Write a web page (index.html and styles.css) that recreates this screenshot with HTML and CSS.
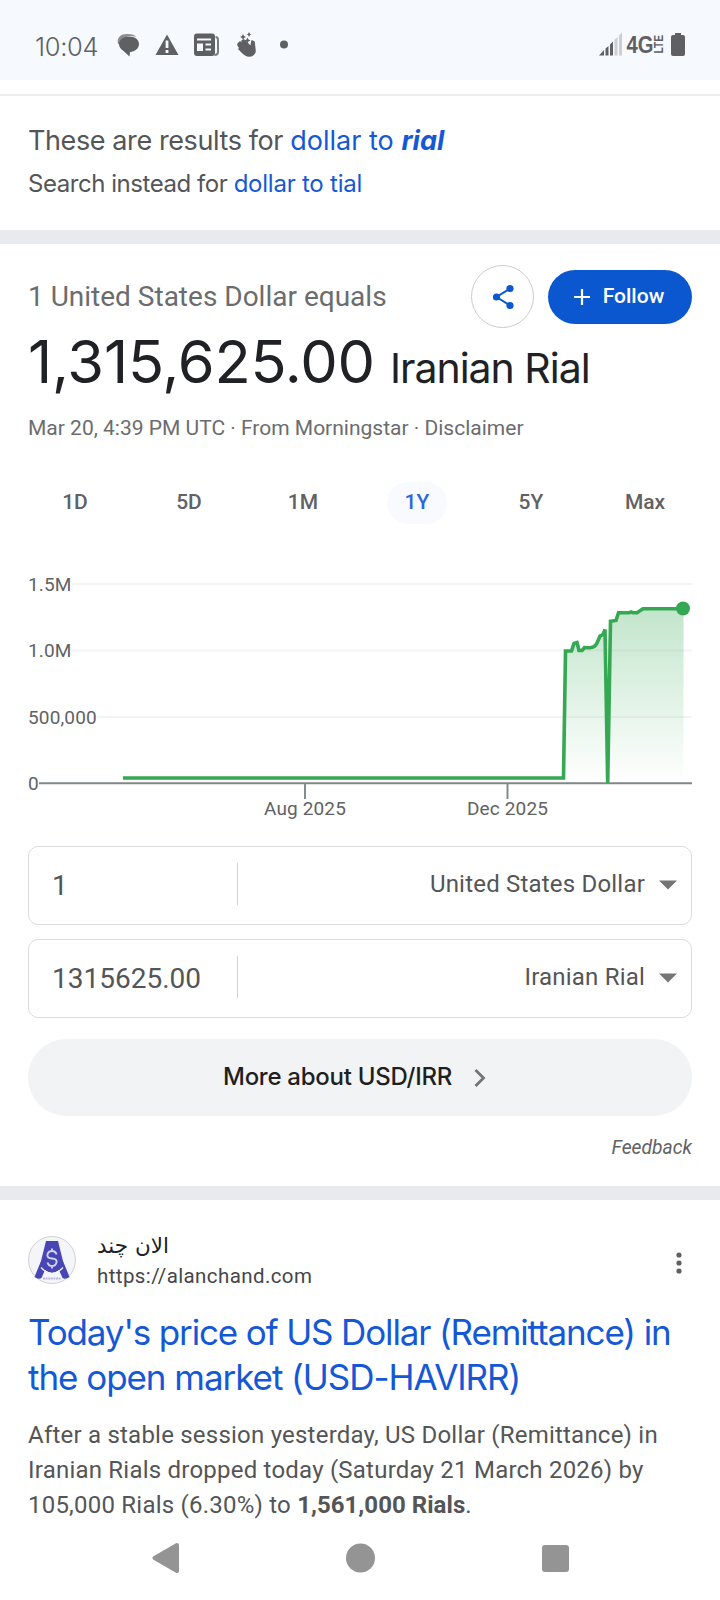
FILE: index.html
```html
<!DOCTYPE html>
<html lang="en">
<head>
<meta charset="utf-8">
<title>dollar to rial</title>
<link rel="stylesheet" href="styles.css">
</head>
<body>
<div class="phone">
  <header class="status">
    <span class="clock">10:04</span>
    <svg class="status-icons" width="180" height="28" viewBox="0 0 180 28">
      <g fill="#5f6062">
        <path d="M1 13C-.500 6 4 3 10 3c5 0 8 1 9.500 3-6-2-15-1-17 7z" fill="#8b8d90"/>
        <path d="M12 5.500c6 0 10 3 10 7.500s-4 7.500-9 8l-.500 4.500-6-5.500C3 18 2 15 2 13c0-4 4-7.500 10-7.500z"/>
        <path d="M50 3.500 61.500 24h-23z"/>
        <rect x="77" y="2.500" width="21" height="22.500" rx="3"/>
        <path d="M98.500 6q2.500 0 2.500 3V21q0 3-3.500 3" fill="none" stroke="#7b7c7f" stroke-width="2"/>
        <path d="M121 13l2-2 7 5-5-6 2-1 7 7 1-6 2 1 1 9c0 3-3 5-6 5-4 0-6-3-10-7l1-1-2-3 2-1z" stroke="#5f6062" stroke-width="1.600" stroke-linejoin="round"/>
        <path d="M126 3l1 2 2 1-2 1-1 2-1-2-2-1 2-1zM132 1l1 2 1.500.500-1.500.500-1 2-1-2-1.500-.500L131 3zM130.500 6.500l1 2 2 1-2 1-1 2-1-2-2-1 2-1z"/>
        <circle cx="167" cy="13.500" r="4"/>
      </g>
      <path d="M50 9.500v7.500M50 19v3" stroke="#f6f9fe" stroke-width="2.800"/>
      <path d="M80 8.500h14M88.500 13.500h5.500M88.500 18.500h5.500" stroke="#f6f9fe" stroke-width="1.900"/>
      <rect x="80" y="12.500" width="6" height="7.500" fill="#f6f9fe"/>
    </svg>
    <svg class="signal" width="88" height="26" viewBox="0 0 88 26">
      <path d="M1 22.500 6 17v5.500zM7.500 15.500 10.500 13v9.500h-3zM12 11.500l3-3v14h-3z" fill="#5f6062"/>
      <path d="M16.500 7l3-3v18.500h-3zM21 2.500l3-3v23h-3z" fill="#cdcfd3"/>
      <text x="28.500" y="20" class="net" textLength="27" lengthAdjust="spacingAndGlyphs">4G</text>
      <text class="lte" transform="translate(64.500 20.500) rotate(-90)" textLength="18.500" lengthAdjust="spacingAndGlyphs">LTE</text>
      <path d="M77 0h6v2h2q2 0 2 2v17q0 2-2 2H75q-2 0-2-2V4q0-2 2-2h2z" fill="#5f6062"/>
    </svg>
  </header>

  <section class="spell">
    <p class="spell-main">These are results for <a>dollar to <b>rial</b></a></p>
    <p class="spell-sub">Search instead for <a>dollar to tial</a></p>
  </section>

  <section class="finance">
    <div class="top-row">
      <span class="equals">1 United States Dollar equals</span>
      <button class="share" aria-label="Share">
        <svg width="24" height="26" viewBox="0 0 24 26"><path d="M19 4.500 5.500 13 19 21.500" fill="none" stroke="#0b57d0" stroke-width="2"/><g fill="#0b57d0"><circle cx="19" cy="4.500" r="3.600"/><circle cx="5.500" cy="13" r="3.600"/><circle cx="19" cy="21.500" r="3.600"/></g></svg>
      </button>
      <button class="follow">
        <svg width="18" height="18" viewBox="0 0 18 18"><path d="M9 1v16M1 9h16" stroke="#fff" stroke-width="2.200"/></svg>
        <span>Follow</span>
      </button>
    </div>
    <div class="amount"><span class="value">1,315,625.00</span><span class="unit">Iranian Rial</span></div>
    <div class="source">Mar 20, 4:39 PM UTC · From Morningstar · Disclaimer</div>
    <nav class="tabs">
      <span>1D</span><span>5D</span><span>1M</span><span class="on"><i>1Y</i></span><span>5Y</span><span>Max</span>
    </nav>
    <svg class="chart" width="664" height="260" viewBox="28 570 664 260">
      <defs><linearGradient id="fade" x1="0" y1="608" x2="0" y2="783" gradientUnits="userSpaceOnUse"><stop offset="0" stop-color="#34a853" stop-opacity=".3"/><stop offset="1" stop-color="#34a853" stop-opacity="0"/></linearGradient></defs>
      <path d="M72 584H692M72 650.500H692M97 717H692" stroke="#f4f4f5" stroke-width="1.800"/>
      <path d="M563 783 565.500 651H571L574 643 577 642 579 650.500H582L585 647.500 590 648 595 646 600 635 603 634.500 605 630 607.700 783 610.500 621H616L618.500 612.700 637 612.500 643 608.700H683.500V783z" fill="url(#fade)"/>
      <path d="M39 783.200H692M305 783v16M507.500 783v16" stroke="#80868b" stroke-width="1.900" fill="none"/>
      <path d="M123 778H563.500L565.500 651H571.500L574 643.500 577 642.500 579 650.500H582L584.500 647.500 590 647.700Q595 647.500 597 643L600 636 603 634.500 605 629.500 607.700 783 610.500 621.300 616 620.500 618.500 612.800H629L631 612 633 612.700H637L643 608.700H683" fill="none" stroke="#34a853" stroke-width="3.600"/>
      <circle cx="683" cy="608.500" r="7" fill="#34a853"/>
      <g class="axis">
        <text x="28" y="591">1.5M</text><text x="28" y="657">1.0M</text><text x="28" y="724">500,000</text><text x="28" y="790">0</text>
        <text x="305" y="815" text-anchor="middle">Aug 2025</text><text x="507.500" y="815" text-anchor="middle">Dec 2025</text>
      </g>
    </svg>
    <div class="field">
      <span class="num">1</span><span class="currency">United States Dollar</span><svg width="18" height="10" viewBox="0 0 18 10"><path d="M0 .500h18l-9 9z" fill="#757575"/></svg>
    </div>
    <div class="field">
      <span class="num">1315625.00</span><span class="currency">Iranian Rial</span><svg width="18" height="10" viewBox="0 0 18 10"><path d="M0 .500h18l-9 9z" fill="#757575"/></svg>
    </div>
    <a class="more"><span>More about USD/IRR</span><svg width="12" height="20" viewBox="0 0 12 20"><path d="M1.500 2 9.500 10l-8 8" fill="none" stroke="#757575" stroke-width="2.800"/></svg></a>
    <div class="feedback">Feedback</div>
  </section>

  <article class="result">
    <div class="site">
      <svg class="favicon" width="48" height="48" viewBox="0 0 48 48">
        <circle cx="24" cy="24" r="23.500" fill="#f3f5f8" stroke="#cfd1d5"/>
        <path d="M18 5h12l5 20 6.500 16q-4 3-7 1l-3.500-8q-7 5.500-14 0l-3.500 8q-3 2-7-1L13 25z" fill="#4845b5"/>
        <path d="M13 31.500q11 12 22 0" fill="none" stroke="#f3f5f8" stroke-width="1.200"/>
        <path d="M15 42.500h18" stroke="#b9b9e4" stroke-width="2" stroke-dasharray="2 .6"/>
        <path d="M28.500 18.500q-1-3.500-4.500-3.500t-4.500 3.500 4.500 4 4.500 4-4.500 3.500-4.500-3.500M24 12.500v3M24 29.500v3" fill="none" stroke="#d2d4f0" stroke-width="1.900"/>
      </svg>
      <div class="site-text"><span class="name" lang="fa" dir="rtl">الان چند</span><span class="url">https://alanchand.com</span></div>
      <svg class="dots" width="6" height="24" viewBox="0 0 6 24"><g fill="#5f6062"><circle cx="3" cy="4" r="2.600"/><circle cx="3" cy="12" r="2.600"/><circle cx="3" cy="20" r="2.600"/></g></svg>
    </div>
    <h3><span class="t1">Today's price of US Dollar (Remittance) in</span><br><span class="t2">the open market (USD-HAVIRR)</span></h3>
    <p class="snippet">After a stable session yesterday, US Dollar (Remittance) in<br>Iranian Rials dropped today (Saturday 21 March 2026) by<br>105,000 Rials (6.30%) to <b>1,561,000 Rials</b>.</p>
  </article>

  <footer class="navbar">
    <svg width="28" height="30" viewBox="0 0 28 30"><path d="M25 2 2.500 15 25 28z" fill="#949494" stroke="#949494" stroke-width="4" stroke-linejoin="round"/></svg>
    <svg width="30" height="30" viewBox="0 0 30 30"><circle cx="14.500" cy="15" r="14.500" fill="#949494"/></svg>
    <svg width="27" height="27" viewBox="0 0 27 27"><rect width="27" height="27" rx="3" fill="#949494"/></svg>
  </footer>
</div>
</body>
</html>
```

FILE: styles.css
```css
* { box-sizing: border-box; }
body { margin: 0; background: #fff; font-family: Roboto, sans-serif; color: #5f6062; }
p, h3 { margin: 0; font-weight: 400; }
button { border: 0; padding: 0; font: inherit; }
svg { display: block; flex: none; overflow: visible; }
a { color: #1558d6; }
.phone { width: 720px; height: 1600px; overflow: hidden; display: flex; flex-direction: column; white-space: nowrap; }

.status { height: 80px; flex: none; background: #f6f9fe; display: flex; align-items: flex-start; padding: 32px 34px 0 35px; }
.clock { font: 300 25.500px/29px Inter, sans-serif; width: 82px; letter-spacing: -.3px; }
.status-icons { margin-top: -1px; }
.signal { margin: 1px 0 0 auto; }
.net { font: 700 24px "Liberation Sans", sans-serif; fill: #5f6062; }
.lte { font: 700 12px "Liberation Sans", sans-serif; fill: #5f6062; }

.spell { height: 150px; flex: none; margin-top: 14px; border-top: 2px solid #ededee; border-bottom: 14px solid #e8eaed; padding: 24px 28px 0; font-family: Inter, sans-serif; color: #545557; }
.spell-main { font-size: 27px; line-height: 42px; letter-spacing: -.400px; }
.spell-main a { letter-spacing: 0; }
.spell-main b { font-style: italic; font-weight: 700; }
.spell-sub { font-size: 24px; line-height: 44px; letter-spacing: -.450px; }
.spell-sub a { letter-spacing: -.230px; }

.finance { height: 956px; flex: none; padding: 21px 28px 0; border-bottom: 14px solid #e8eaed; }
.top-row { display: flex; align-items: center; height: 63px; }
.equals { flex: 1; font-size: 28px; color: #6b6c6e; }
.share { width: 63px; height: 63px; border: 1px solid #ccc; border-radius: 50%; background: #fff; display: grid; place-items: center; margin-right: 14px; }
.follow { width: 144px; height: 54px; border-radius: 27px; background: #0b57d0; color: #fff; font-size: 21px; line-height: 25px; font-weight: 500; display: flex; align-items: center; justify-content: center; gap: 12px; padding-right: 3px; }
.amount { height: 70px; line-height: 66px; color: #202124; font-family: Inter, sans-serif; display: flex; align-items: baseline; gap: 15px; }
.value { font-size: 59.500px; letter-spacing: -.200px; }
.unit { font-size: 41px; letter-spacing: -1px; }
.source { font-size: 21px; line-height: 30px; margin-top: 15px; color: #6b6c6e; }
.tabs { display: grid; grid-template-columns: repeat(6, 114px); height: 42px; margin: 39px -10px 46px; font-size: 21px; font-weight: 500; line-height: 40px; text-align: center; color: #616264; }
.tabs i { display: inline-block; width: 60px; height: 42px; border-radius: 21px; background: #f8fafd; color: #2f66d9; font-style: normal; }
.axis { font-size: 19px; fill: #616264; letter-spacing: .150px; }
.chart { margin-bottom: 16px; }
.field { height: 79px; border: 1px solid #dadce0; border-radius: 10px; margin-bottom: 14px; display: flex; align-items: center; padding: 0 14px 0 23px; color: #545557; }
.field svg { margin-bottom: 2px; }
.num { width: 186px; height: 42px; line-height: 46px; margin-bottom: 3px; border-right: 1px solid #d0d1d4; font-size: 28px; }
.currency { flex: 1; text-align: right; font-size: 24px; letter-spacing: .200px; margin: 0 14px 3px 0; }
.more { display: flex; align-items: center; height: 77px; margin-top: 21px; border-radius: 39px; background: #f1f3f4; color: #1f1f1f; font: 500 24px Inter, sans-serif; letter-spacing: -.270px; padding-left: 195px; gap: 22px; }
.more span { padding-bottom: 2px; }
.feedback { text-align: right; font-style: italic; font-size: 19.300px; line-height: 24px; margin-top: 20px; color: #616264; }

.result { height: 316px; flex: none; padding: 35px 28px 0; }
.site { height: 52px; display: flex; align-items: center; }
.favicon { margin-bottom: 3px; }
.site-text { flex: 1; display: flex; flex-direction: column; align-items: flex-start; margin-left: 21px; }
.name { font: 21.500px/28px "DejaVu Sans", sans-serif; color: #202124; }
.url { font-size: 20.500px; line-height: 32px; margin-bottom: -2px; letter-spacing: .4px; color: #444649; }
.dots { margin: 3px 10px 0 0; }
.result h3 { font: 400 35px/45px Inter, sans-serif; color: #1558d6; margin-top: 23px; }
.t1 { letter-spacing: -1.140px; }
.t2 { letter-spacing: -1.050px; }
.snippet { font-size: 24px; line-height: 35px; letter-spacing: .220px; margin-top: 18px; color: #545557; }
.snippet b { font-weight: 700; letter-spacing: .050px; }

.navbar { height: 84px; flex: none; display: flex; align-items: center; justify-content: space-between; padding: 0 151px 0 152px; }
```
